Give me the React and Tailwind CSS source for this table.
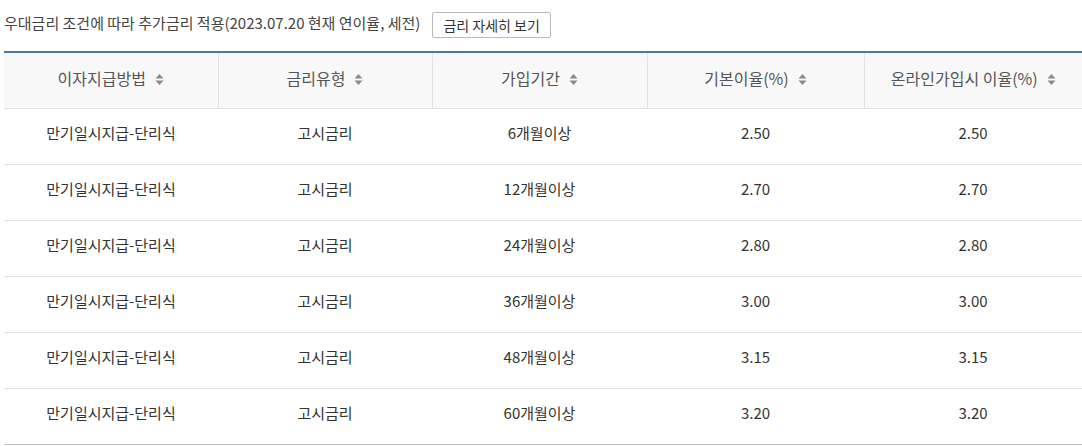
const rows = [
  ["6개월이상", "2.50", "2.50"],
  ["12개월이상", "2.70", "2.70"],
  ["24개월이상", "2.80", "2.80"],
  ["36개월이상", "3.00", "3.00"],
  ["48개월이상", "3.15", "3.15"],
  ["60개월이상", "3.20", "3.20"],
];

const heads = ["이자지급방법", "금리유형", "가입기간", "기본이율(%)", "온라인가입시 이율(%)"];

const SortIcon = () => (
  <svg width="9" height="13" viewBox="0 0 9 13" className="ml-[9px] inline-block align-[-1px]">
    <path d="M4.5 1 L8.5 5.5 L0.5 5.5 Z" fill="#8a8a8a" />
    <path d="M4.5 12 L8.5 7.5 L0.5 7.5 Z" fill="#8a8a8a" />
  </svg>
);

export default function App() {
  return (
    <div className="w-[1082px] h-[446px] bg-white overflow-hidden pl-[4px] font-['Noto_Sans_CJK_KR','Noto_Sans',sans-serif]">
      <div className="flex items-center h-[51px] pb-[1px]">
        <p className="text-[15px] text-[#444] pb-[3px]">
          우대금리 조건에 따라 추가금리 적용(2023.07.20 현재 연이율, 세전)
        </p>
        <button className="ml-[12px] h-[26px] px-[10px] border border-[#b9b9b9] rounded-[2px] bg-white text-[14px] text-[#333] leading-none">
          금리 자세히 보기
        </button>
      </div>
      <table className="w-[1078px] table-fixed border-collapse border-t-2 border-[#4a77a9] text-center">
        <colgroup>
          <col className="w-[214px]" />
          <col className="w-[214px]" />
          <col className="w-[215px]" />
          <col className="w-[217px]" />
          <col />
        </colgroup>
        <thead>
          <tr className="bg-[#f8f8f8] h-[56px] border-b border-[#dedede]">
            {heads.map((h, i) => (
              <th
                key={h}
                className={`font-normal text-[16px] text-[#555] pb-[5px] ${i < 4 ? "border-r border-[#e2e2e2]" : ""}`}
              >
                {h}
                <SortIcon />
              </th>
            ))}
          </tr>
        </thead>
        <tbody className="text-[15px] text-[#333]">
          {rows.map((r, i) => (
            <tr key={i} className={`h-[56px] border-b ${i === rows.length - 1 ? "border-[#c4c4c4]" : "border-[#e0e0e0]"}`}>
              <td className="pb-[5px]">만기일시지급-단리식</td>
              <td className="pb-[5px]">고시금리</td>
              <td className="pb-[5px]">{r[0]}</td>
              <td className="pb-[5px]">{r[1]}</td>
              <td className="pb-[5px]">{r[2]}</td>
            </tr>
          ))}
        </tbody>
      </table>
    </div>
  );
}
